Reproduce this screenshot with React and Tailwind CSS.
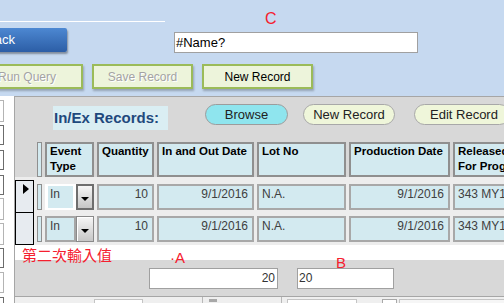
import React from "react";

const SANS = "font-['Liberation_Sans',Arial,sans-serif]";

const LEFT_BOXES = [
  { cls: "mt-[4px] h-[22px] border-[#b4b4b4]" },
  { cls: "mt-[3px] h-[20px] border-[#6c6c6c]" },
  { cls: "mt-[5px] h-[20px] border-[#6c6c6c]" },
  { cls: "mt-[5px] h-[20px] border-[#6c6c6c]" },
  { cls: "mt-[3px] h-[22px] border-[#b4b4b4]" },
  { cls: "mt-[3px] h-[22px] border-[#b4b4b4]" },
  { cls: "mt-[3px] h-[20px] border-[#6c6c6c]" },
  { cls: "mt-[4px] h-[21px] border-[#b4b4b4]" },
  { cls: "mt-[4px] h-[12px] border-[#6c6c6c]" },
];

const ROWS = [
  { qty: "10", date: "9/1/2016", lot: "N.A.", prod: "9/1/2016", rel: "343 MY1601", current: true },
  { qty: "10", date: "9/1/2016", lot: "N.A.", prod: "9/1/2016", rel: "343 MY1601", current: false },
];

function Arrow() {
  return (
    <div className="mt-[3px] w-0 h-0 border-l-[4px] border-r-[4px] border-t-[4px] border-l-transparent border-r-transparent border-t-black" />
  );
}

function Combo({ focused }) {
  if (focused) {
    return (
      <div className="mt-[4px] w-[49px] h-[26px] flex bg-white shrink-0">
        <div className="ml-[3px] mt-[2px] w-[25px] h-[22px] bg-[#d3eaf0] pl-[2px] pt-px leading-[14px]">In</div>
        <div className="ml-[3px] w-[18px] h-[26px] border-2 border-[#6e6e6e] bg-gradient-to-b from-[#f6f6f6] to-[#c6c6c6] flex items-center justify-center">
          <Arrow />
        </div>
      </div>
    );
  }
  return (
    <div className="mt-[4px] w-[49px] h-[26px] flex shrink-0">
      <div className="w-[31px] h-[26px] border-2 border-[#a6a6a6] bg-[#d3eaf0] pl-[3px] pt-px leading-[14px]">In</div>
      <div className="w-[18px] h-[26px] border border-[#8a8a8a] shadow-[inset_1px_1px_0_#fff] bg-gradient-to-b from-[#f6f6f6] to-[#c6c6c6] flex items-center justify-center">
        <Arrow />
      </div>
    </div>
  );
}

function Cell({ w, right, children }) {
  return (
    <div
      className={`mt-[4px] h-[26px] ${w} shrink-0 border-2 border-[#a8a8a8] bg-[#d3eaf0] pt-px leading-[14px] whitespace-nowrap overflow-hidden ${
        right ? "text-right pr-[4px]" : "pl-[3px]"
      }`}
    >
      {children}
    </div>
  );
}

function Head({ w, children }) {
  return (
    <div className={`h-[35px] ${w} shrink-0 border-2 border-[#8f8f8f] bg-[#d3eaf0] px-[3px] text-[11.5px] font-bold leading-[15px] text-black whitespace-nowrap overflow-hidden`}>
      {children}
    </div>
  );
}

export default function App() {
  return (
    <div className={`relative w-[504px] h-[303px] overflow-hidden bg-[#c6d9f0] flex flex-col ${SANS}`}>
      {/* top area */}
      <div className="h-[96px] shrink-0">
        <div className="h-[21px]" />
        <div className="h-px w-[165px] bg-white" />
        <div className="mt-[6px] h-[25px] flex items-start">
          <div className="-ml-[30px] w-[97px] h-[24px] shrink-0 pl-[16px] flex items-center bg-gradient-to-b from-[#4d88d2] to-[#2c5ea6] text-white text-[13px] shadow-[1px_2px_2px_rgba(0,0,0,0.35)] rounded-[2px]">
            Back
          </div>
          <div className="ml-[107px] mt-[4px] w-[244px] h-[21px] shrink-0 bg-white border border-[#a0a0a0] pl-[1px] text-[13px] leading-[19px] text-black">
            #Name?
          </div>
        </div>
        <div className="mt-[11px] flex h-[25px] text-[12px]">
          <div className="-ml-[29px] w-[112px] h-[25px] shrink-0 border-2 border-[#9bbb59] bg-[#edf4db] flex items-center justify-center text-[#a3a3a3] [text-shadow:1px_1px_0_#fff] shadow-[1px_2px_2px_rgba(0,0,0,0.25)]">
            Run Query
          </div>
          <div className="ml-[9px] w-[101px] h-[25px] shrink-0 border-2 border-[#9bbb59] bg-[#edf4db] flex items-center justify-center text-[#a3a3a3] [text-shadow:1px_1px_0_#fff] shadow-[1px_2px_2px_rgba(0,0,0,0.25)]">
            Save Record
          </div>
          <div className="ml-[9px] w-[111px] h-[25px] shrink-0 border-2 border-[#9bbb59] bg-[#edf4db] flex items-center justify-center text-black shadow-[1px_2px_2px_rgba(0,0,0,0.25)]">
            New Record
          </div>
        </div>
      </div>

      {/* main */}
      <div className="flex flex-1 min-h-0">
        <div className="w-[15px] shrink-0 bg-white border-r border-[#a6a6a6] flex flex-col">
          {LEFT_BOXES.map((b, i) => (
            <div key={i} className={`w-[4px] shrink-0 border-y border-r ${b.cls}`} />
          ))}
        </div>

        <div className="flex-1 min-w-0 bg-[#d8d8d8] border-t border-[#a6a6a6] flex flex-col">
          {/* form header */}
          <div className="h-[80px] shrink-0">
            <div className="mt-[7px] flex items-start text-[13px]">
              <div className="ml-[38px] mt-[2px] w-[115px] h-[24px] shrink-0 bg-[#daeef3] pl-[1px] text-[15px] font-bold leading-[24px] text-[#1f497d] whitespace-nowrap">
                In/Ex Records:
              </div>
              <div className="ml-[37px] w-[83px] h-[21px] shrink-0 rounded-full border border-[#9c9c9c] bg-[#8fe5ee] flex items-center justify-center text-[#222]">
                Browse
              </div>
              <div className="ml-[15px] w-[92px] h-[21px] shrink-0 rounded-full border border-[#a8a8a8] bg-[#eff6da] flex items-center justify-center text-[#222]">
                New Record
              </div>
              <div className="ml-[19px] w-[96px] h-[21px] shrink-0 rounded-full border border-[#a8a8a8] bg-[#eff6da] pl-[15px] flex items-center text-[#222] whitespace-nowrap">
                Edit Record
              </div>
            </div>
            <div className="mt-[12px] flex gap-[3px] pl-[22px]">
              <div className="w-[5px] h-[35px] shrink-0 border border-[#8f8f8f] bg-[#d3eaf0]" />
              <Head w="w-[49px]">
                Event
                <br />
                Type
              </Head>
              <Head w="w-[57px]">Quantity</Head>
              <Head w="w-[97px]">In and Out Date</Head>
              <Head w="w-[89px]">Lot No</Head>
              <Head w="w-[101px]">Production Date</Head>
              <Head w="w-[95px]">
                Released
                <br />
                For Program
              </Head>
            </div>
          </div>

          {/* detail rows */}
          <div className="bg-[#ededed] pt-[3px] shrink-0 text-[12px] text-[#404040]">
            {ROWS.map((r, i) => (
              <div key={i} className={`h-[33px] flex items-start ${i > 0 ? "-mt-px" : ""}`}>
                <div className="w-[19px] h-[33px] shrink-0 border border-black bg-[#e7ebf0] pl-[7px] pt-[3px]">
                  {r.current && (
                    <div className="w-0 h-0 border-t-[5px] border-b-[5px] border-l-[6px] border-t-transparent border-b-transparent border-l-black" />
                  )}
                </div>
                <div className="ml-[3px] flex gap-[3px]">
                  <div className="mt-[4px] w-[5px] h-[26px] shrink-0 border border-[#8f8f8f] bg-[#d3eaf0]" />
                  <Combo focused={r.current} />
                  <Cell w="w-[57px]" right>{r.qty}</Cell>
                  <Cell w="w-[97px]" right>{r.date}</Cell>
                  <Cell w="w-[89px]">{r.lot}</Cell>
                  <Cell w="w-[101px]" right>{r.prod}</Cell>
                  <Cell w="w-[95px]">{r.rel}</Cell>
                </div>
              </div>
            ))}
          </div>

          {/* label band */}
          <div className="h-[15px] shrink-0 bg-white relative z-10">
            <div className="ml-[7px] mt-[1px] text-[15px] leading-[17px] text-[#f5202f] font-['Noto_Sans_CJK_TC',sans-serif] font-normal whitespace-nowrap">
              第二次輸入值
            </div>
          </div>

          {/* footer */}
          <div className="h-[36px] shrink-0 flex items-start text-[12px] text-[#333]">
            <div className="ml-[134px] mt-[8px] w-[129px] h-[21px] shrink-0 bg-white border border-[#a0a0a0] pr-[2px] text-right leading-[19px]">
              20
            </div>
            <div className="ml-[19px] mt-[8px] w-[97px] h-[21px] shrink-0 bg-white border border-[#a0a0a0] pl-[1px] leading-[19px]">
              20
            </div>
          </div>

          {/* navigation bar */}
          <div className="flex-1 border-t border-[#a6a6a6] bg-[#efefef] flex items-start">
            <div className="ml-[79px] mt-[2px] w-[49px] h-[8px] shrink-0 border-t border-x border-[#c4c4c4] bg-white" />
            <div className="ml-[59px] w-px h-[8px] shrink-0 bg-[#b8b8b8]" />
            <div className="ml-[6px] mt-[2px] w-[8px] h-[3px] shrink-0 bg-[#a8a8a8]" />
            <div className="ml-[64px] w-px h-[8px] shrink-0 bg-[#b8b8b8]" />
            <div className="ml-[5px] mt-[2px] w-[70px] h-[8px] shrink-0 border-t border-x border-[#c4c4c4] bg-white" />
            <div className="ml-[25px] mt-[2px] w-[15px] h-[8px] shrink-0 border-t border-x border-[#a8a8a8] bg-white" />
            <div className="ml-[2px] mt-[2px] flex-1 h-[8px] border-t border-l border-[#c4c4c4] bg-[#f6f6f6]" />
          </div>
        </div>
      </div>

      {/* red annotations */}
      <div className="absolute left-[265px] top-[11px] text-[16px] leading-[16px] text-[#f5202f]">C</div>
      <div className="absolute left-[170px] top-[250px] z-20 text-[15px] leading-[16px] text-[#f5202f]">·A</div>
      <div className="absolute left-[336px] top-[255px] z-20 text-[15px] leading-[16px] text-[#f5202f]">B</div>
    </div>
  );
}
